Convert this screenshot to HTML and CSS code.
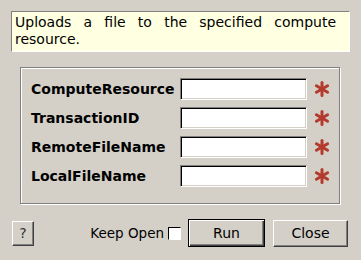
FILE: index.html
```html
<!DOCTYPE html>
<html lang="en">
<head>
    <meta charset="UTF-8">
    <title>Upload File</title>
    <link rel="stylesheet" href="styles.css">
</head>
<body>
<div class="dialog">
    <p class="description">Uploads a file to the specified compute resource.</p>

    <div class="group">
        <div class="field-row">
            <label for="computeResource">ComputeResource</label>
            <input type="text" id="computeResource">
            <span class="required"><svg width="16" height="16" viewBox="0 0 16 16"><g stroke="#b33a2c" stroke-width="3" stroke-linecap="round"><line x1="8" y1="1.5" x2="8" y2="14.5"/><line x1="2.4" y1="4.8" x2="13.6" y2="11.2"/><line x1="2.4" y1="11.2" x2="13.6" y2="4.8"/></g></svg></span>
        </div>
        <div class="field-row">
            <label for="transactionId">TransactionID</label>
            <input type="text" id="transactionId">
            <span class="required"><svg width="16" height="16" viewBox="0 0 16 16"><g stroke="#b33a2c" stroke-width="3" stroke-linecap="round"><line x1="8" y1="1.5" x2="8" y2="14.5"/><line x1="2.4" y1="4.8" x2="13.6" y2="11.2"/><line x1="2.4" y1="11.2" x2="13.6" y2="4.8"/></g></svg></span>
        </div>
        <div class="field-row">
            <label for="remoteFileName">RemoteFileName</label>
            <input type="text" id="remoteFileName">
            <span class="required"><svg width="16" height="16" viewBox="0 0 16 16"><g stroke="#b33a2c" stroke-width="3" stroke-linecap="round"><line x1="8" y1="1.5" x2="8" y2="14.5"/><line x1="2.4" y1="4.8" x2="13.6" y2="11.2"/><line x1="2.4" y1="11.2" x2="13.6" y2="4.8"/></g></svg></span>
        </div>
        <div class="field-row">
            <label for="localFileName">LocalFileName</label>
            <input type="text" id="localFileName">
            <span class="required"><svg width="16" height="16" viewBox="0 0 16 16"><g stroke="#b33a2c" stroke-width="3" stroke-linecap="round"><line x1="8" y1="1.5" x2="8" y2="14.5"/><line x1="2.4" y1="4.8" x2="13.6" y2="11.2"/><line x1="2.4" y1="11.2" x2="13.6" y2="4.8"/></g></svg></span>
        </div>
    </div>

    <div class="footer">
        <button class="btn help-btn">?</button>
        <label class="keep-open">Keep Open <span class="check"></span></label>
        <button class="btn run-btn">Run</button>
        <button class="btn close-btn">Close</button>
    </div>
</div>
</body>
</html>
```

FILE: styles.css
```css
html, body {
    margin: 0;
    padding: 0;
    background-color: #d4d0c8;
}

body {
    font-family: "DejaVu Sans", sans-serif;
    font-size: 14px;
    color: #000;
    width: 361px;
    height: 260px;
}

.dialog {
    padding: 11px 11px 0 11px;
}

.description {
    margin: 0;
    width: 339px;
    height: 41px;
    box-sizing: border-box;
    padding: 2px 13px 0 3px;
    background-color: #ffffe1;
    border-top: 1px solid #808080;
    border-left: 1px solid #808080;
    border-right: 1px solid #fff;
    border-bottom: 1px solid #fff;
    line-height: 17px;
    text-align: justify;
}

.group {
    margin: 15px 0 0 9px;
    width: 320px;
    height: 137px;
    box-sizing: border-box;
    padding: 10px 0 0 10px;
    border: 1px solid #808080;
    box-shadow: 1px 1px 0 #fff, inset 1px 1px 0 #fff;
    display: flex;
    flex-direction: column;
    gap: 7px;
}

.field-row {
    display: flex;
    align-items: center;
    height: 22px;
}

.field-row label {
    width: 149px;
    font-weight: bold;
}

.field-row input {
    width: 127px;
    height: 22px;
    box-sizing: border-box;
    margin: 0;
    padding: 0 3px;
    background: #fff;
    border-top: 1px solid #808080;
    border-left: 1px solid #808080;
    border-right: 1px solid #fff;
    border-bottom: 1px solid #fff;
    box-shadow: inset 1px 1px 0 #000, inset -1px -1px 0 #d4d0c8;
    outline: none;
}

.required {
    display: flex;
    margin-left: 7px;
}

.footer {
    display: flex;
    align-items: center;
    margin-top: 15px;
    height: 28px;
    width: 338px;
}

.btn {
    font-family: "DejaVu Sans", sans-serif;
    font-size: 14px;
    color: #000;
    background-color: #d4d0c8;
    margin: 0;
    padding: 0;
    box-sizing: border-box;
    border-top: 1px solid #fff;
    border-left: 1px solid #fff;
    border-right: 1px solid #404040;
    border-bottom: 1px solid #404040;
    box-shadow: inset -1px -1px 0 #808080;
}

.help-btn {
    margin-left: 1px;
    width: 22px;
    height: 25px;
    font-size: 14px;
    color: #333;
}

.keep-open {
    margin-left: auto;
    display: flex;
    align-items: center;
    gap: 4px;
    font-size: 13.5px;
}

.check {
    width: 13px;
    height: 13px;
    box-sizing: border-box;
    background: #fff;
    border-top: 1px solid #000;
    border-left: 1px solid #000;
    border-right: 1px solid #fff;
    border-bottom: 1px solid #fff;
    box-shadow: 1px 1px 0 #d4d0c8;
}

.run-btn {
    margin-left: 7px;
    width: 77px;
    height: 28px;
    border: 1px solid #000;
    box-shadow: inset 1px 1px 0 #fff, inset -1px -1px 0 #404040, inset -2px -2px 0 #808080;
}

.close-btn {
    margin-left: 8px;
    margin-right: 1px;
    width: 75px;
    height: 27px;
}
```
